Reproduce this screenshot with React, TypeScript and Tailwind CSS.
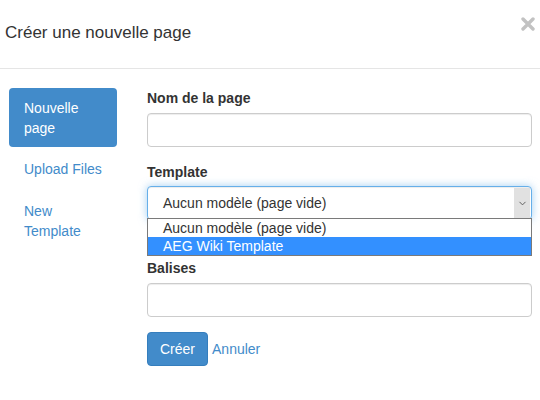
import { ChevronDown } from 'lucide-react'

const navItems = [
  { label: 'Nouvelle page', active: true },
  { label: 'Upload Files', active: false },
  { label: 'New Template', active: false },
]

const inputClass =
  'h-[34px] w-full rounded-[4px] border border-[#ccc] bg-white shadow-[inset_0_1px_1px_rgba(0,0,0,0.075)]'

const App = () => {
  return (
    <div className="w-[540px] h-[400px] bg-white text-[14px] leading-[20px] text-[#333] font-['Liberation_Sans',Arial,sans-serif]">
      {/* header */}
      <div className="flex justify-between h-[69px] px-[5px] pt-[17px] border-b border-[#e5e5e5]">
        <h4 className="mt-[3px] text-[17px] leading-[26px] text-[#333]">Créer une nouvelle page</h4>
        <button className="w-[14px] h-[14px]" aria-label="close">
          <svg viewBox="0 0 14 14" className="w-[14px] h-[14px]">
            <path d="M2 2 L12 12 M12 2 L2 12" stroke="#c2c2c2" strokeWidth="3.4" strokeLinecap="round" />
          </svg>
        </button>
      </div>

      <div className="flex pl-[9px] pr-[8px] pt-[19px]">
        {/* nav */}
        <ul className="w-[108px] flex flex-col gap-[2px]">
          {navItems.map((item) => (
            <li
              key={item.label}
              className={
                item.active
                  ? 'px-[15px] pt-[10px] pb-[9px] rounded-[4px] bg-[#428bca] text-white'
                  : 'px-[15px] py-[10px] rounded-[4px] text-[#428bca]'
              }
            >
              {item.label}
            </li>
          ))}
        </ul>

        {/* form */}
        <div className="flex-1 ml-[30px]">
          <div className="mb-[15px]">
            <label className="block mb-[5px] font-bold">Nom de la page</label>
            <div className={inputClass} />
          </div>

          <div className="mb-[38px]">
            <label className="block mb-[4px] font-bold">Template</label>
            <div className="relative">
              <div className="flex items-center h-[34px] rounded-[4px] border border-[#66afe9] bg-white pl-[15px] shadow-[inset_0_1px_1px_rgba(0,0,0,0.075),0_0_8px_rgba(102,175,233,0.6)]">
                <span className="flex-1">Aucun modèle (page vide)</span>
                <div className="flex items-center justify-center w-[16px] h-[31px] mr-px bg-[#e1e1e1]">
                  <ChevronDown className="w-[11px] h-[11px] text-[#555]" strokeWidth={2} />
                </div>
              </div>
              <div className="absolute left-0 right-0 top-[32px] border border-[#7a7a7a] bg-white leading-[18px]">
                <div className="pl-[15px] h-[18px]">Aucun modèle (page vide)</div>
                <div className="pl-[15px] h-[18px] bg-[#3390ff] text-white">AEG Wiki Template</div>
              </div>
            </div>
          </div>

          <div className="mb-[15px]">
            <label className="block mb-[5px] font-bold">Balises</label>
            <div className={inputClass} />
          </div>

          <div className="flex items-center">
            <button className="px-[12px] py-[6px] rounded-[4px] border border-[#357ebd] bg-[#428bca] text-white">
              Créer
            </button>
            <a className="ml-[4px] text-[#428bca]">Annuler</a>
          </div>
        </div>
      </div>
    </div>
  )
}

export default App
